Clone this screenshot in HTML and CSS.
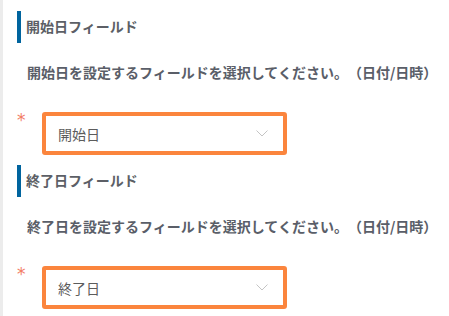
FILE: index.html
```html
<!DOCTYPE html>
<html>
<head>
	<title>date fields</title>
	<meta charset="UTF-8">
	<link rel="stylesheet" href="styles.css">
</head>
<body>
	<div class="page">
		<div class="field">
			<div class="field_title">開始日フィールド</div>
			<div class="field_desc">開始日を設定するフィールドを選択してください。（日付/日時）</div>
			<div class="field_row">
				<span class="required">*</span>
				<div class="select_box">
					<span class="select_text">開始日</span>
					<svg class="select_arrow" width="12" height="7" viewBox="0 0 12 7"><path d="M0.5 0.5 L6 6 L11.5 0.5" fill="none" stroke="#c4c4c4" stroke-width="1"/></svg>
				</div>
			</div>
		</div>
		<div class="field">
			<div class="field_title">終了日フィールド</div>
			<div class="field_desc">終了日を設定するフィールドを選択してください。（日付/日時）</div>
			<div class="field_row">
				<span class="required">*</span>
				<div class="select_box">
					<span class="select_text">終了日</span>
					<svg class="select_arrow" width="12" height="7" viewBox="0 0 12 7"><path d="M0.5 0.5 L6 6 L11.5 0.5" fill="none" stroke="#c4c4c4" stroke-width="1"/></svg>
				</div>
			</div>
		</div>
	</div>
</body>
</html>
```

FILE: styles.css
```css
*{
	margin: 0px;
	padding: 0px;
	box-sizing: border-box;
}
body{
	background-color: white;
	font-family: "Noto Sans CJK JP", "Noto Sans", sans-serif;
	color: #555;
	text-spacing-trim: space-all;
}
.page{
	width: 449px;
	height: 316px;
	border-left: 3px solid #ececec;
	padding-left: 14px;
	overflow: hidden;
}
.field{
	padding-top: 11px;
}
.field + .field{
	padding-top: 10px;
}
.field_title{
	height: 32px;
	line-height: 31px;
	border-left: 4px solid #00649e;
	padding-left: 5px;
	font-size: 14px;
	font-weight: bold;
	color: #5c5f66;
}
.field_desc{
	margin-top: 19px;
	height: 20px;
	line-height: 20px;
	padding-left: 10px;
	font-size: 14px;
	font-weight: bold;
	color: #5a5e68;
	white-space: nowrap;
}
.field_row{
	display: flex;
	margin-top: 30px;
}
.required{
	width: 25px;
	height: 16px;
	font-family: "DejaVu Sans", sans-serif;
	font-size: 17px;
	line-height: 16px;
	color: #f27c64;
}
.select_box{
	width: 245px;
	height: 43px;
	border: 4px solid #fb853d;
	border-radius: 3px;
	display: flex;
	align-items: center;
	justify-content: space-between;
	padding-left: 12px;
	padding-right: 15px;
}
.select_text{
	font-size: 14px;
	color: #5c5c5c;
}
.select_arrow{
	display: block;
}
```
